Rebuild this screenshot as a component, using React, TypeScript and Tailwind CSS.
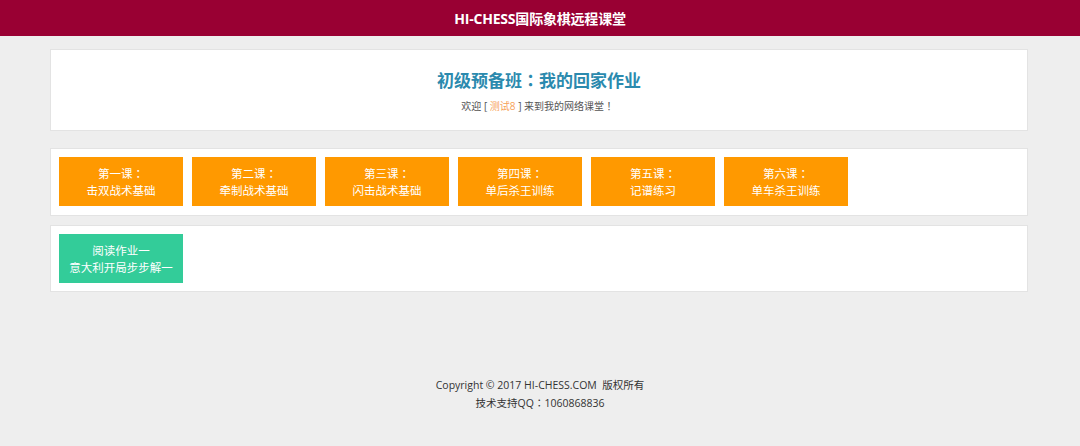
import React from "react";

type Lesson = { title: string; name: string };

const lessons: Lesson[] = [
    { title: "第一课", name: "击双战术基础" },
    { title: "第二课", name: "牵制战术基础" },
    { title: "第三课", name: "闪击战术基础" },
    { title: "第四课", name: "单后杀王训练" },
    { title: "第五课", name: "记谱练习" },
    { title: "第六课", name: "单车杀王训练" },
];

// centred full-width colon, as the reference font draws it
const Colon: React.FC = () => (
    <span style={{ fontFamily: '"Noto Sans CJK TC", sans-serif' }}>：</span>
);

const LessonButton: React.FC<{ top: React.ReactNode; bottom: string; color: string }> = ({ top, bottom, color }) => (
    <a
        className={`${color} w-[124px] h-[49px] flex flex-col items-center justify-center text-white text-[11.5px] leading-[17px] cursor-pointer`}
    >
        <span>{top}</span>
        <span>{bottom}</span>
    </a>
);

export default function App() {
    return (
        <div
            className="min-h-[446px] bg-[#eeeeee] text-[#333]"
            style={{ fontFamily: '"Open Sans", "Noto Sans CJK SC", sans-serif' }}
        >
            <header className="h-9 bg-[#990033] flex items-center justify-center">
                <h1 className="text-white text-[14px] font-bold tracking-[-0.2px]">HI-CHESS国际象棋远程课堂</h1>
            </header>

            <main className="w-[978px] ml-[50px] pt-[13px]">
                <section className="bg-white border border-[#e3e3e3] h-[82px] flex flex-col items-center pt-[17px]">
                    <h2 className="text-[#2b8aae] text-[17px] font-bold leading-[26px]">
                        初级预备班<Colon />我的回家作业
                    </h2>
                    <p className="text-[10px] text-[#555] mt-[5px]">
                        欢迎 [ <span className="text-[#f7a25a]">测试8</span> ] 来到我的网络课堂 ！
                    </p>
                </section>

                <section className="bg-white border border-[#e3e3e3] mt-[17px] px-2 pt-2 pb-[9px] flex gap-[9px]">
                    {lessons.map((l) => (
                        <LessonButton
                            key={l.title}
                            top={<>{l.title}<Colon /></>}
                            bottom={l.name}
                            color="bg-[#ff9900]"
                        />
                    ))}
                </section>

                <section className="bg-white border border-[#e3e3e3] mt-[9px] px-2 pt-2 pb-2 flex gap-[9px]">
                    <LessonButton top="阅读作业一" bottom="意大利开局步步解一" color="bg-[#33cc99]" />
                </section>
            </main>

            <footer className="mt-[84px] text-center text-[10.5px] leading-[18px] text-[#333]">
                <p>Copyright © 2017 HI-CHESS.COM &nbsp;版权所有</p>
                <p>技术支持QQ<Colon />1060868836</p>
            </footer>
        </div>
    );
}
